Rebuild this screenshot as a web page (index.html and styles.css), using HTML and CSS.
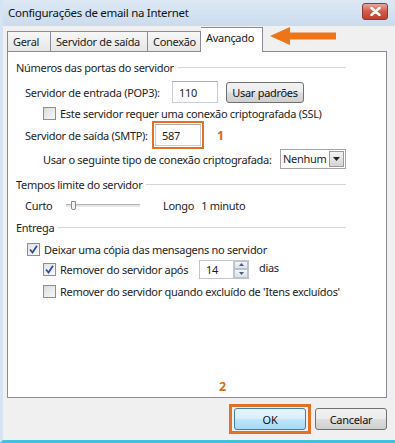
FILE: index.html
```html
<!DOCTYPE html>
<html lang="pt">
<head>
    <meta charset="UTF-8">
    <title>Configurações de email na Internet</title>
    <link rel="stylesheet" href="styles.css">
</head>
<body>
    <div class="window">
        <div class="titlebar">
            <span class="title">Configurações de email na Internet</span>
            <span class="close-btn">
                <svg width="11" height="9" viewBox="0 0 11 9"><path d="M1.5 1 L9.5 8 M9.5 1 L1.5 8" stroke="#fff" stroke-width="2.4" stroke-linecap="round"/></svg>
            </span>
        </div>
        <div class="client">
            <div class="tabs">
                <div class="tab">Geral</div>
                <div class="tab">Servidor de saída</div>
                <div class="tab">Conexão</div>
                <div class="tab active">Avançado</div>
            </div>
            <svg class="arrow" width="66" height="18" viewBox="0 0 66 18">
                <path d="M0 9 L20 0 L20 5.5 L66 5.5 L66 12.5 L20 12.5 L20 18 Z" fill="#ee7418"/>
            </svg>
            <div class="panel">
                <div class="group-head">Números das portas do servidor</div>
                <div class="row row-pop">
                    <span class="label lbl-pop">Servidor de entrada (POP3):</span>
                    <span class="textbox tb-pop">110</span>
                    <span class="button btn-defaults">Usar padrões</span>
                </div>
                <div class="row row-ssl indent2">
                    <span class="checkbox"></span>
                    <span>Este servidor requer uma conexão criptografada (SSL)</span>
                </div>
                <div class="row row-smtp">
                    <span class="label lbl-smtp">Servidor de saída (SMTP):</span>
                    <span class="highlight">
                        <span class="textbox tb-smtp">587</span>
                    </span>
                    <span class="mark mark-1">1</span>
                </div>
                <div class="row row-enc indent2">
                    <span class="label lbl-enc">Usar o seguinte tipo de conexão criptografada:</span>
                    <span class="combo">
                        <span class="combo-text">Nenhum</span>
                        <span class="combo-btn">
                            <svg width="7" height="4" viewBox="0 0 7 4"><path d="M0 0 H7 L3.5 4 Z" fill="#222"/></svg>
                        </span>
                    </span>
                </div>
                <div class="group-head head-timeout">Tempos limite do servidor</div>
                <div class="row row-slider">
                    <span class="lbl-short">Curto</span>
                    <span class="slider">
                        <span class="slider-thumb"></span>
                    </span>
                    <span class="lbl-long">Longo</span>
                    <span>1 minuto</span>
                </div>
                <div class="group-head head-delivery">Entrega</div>
                <div class="row row-keep indent1">
                    <span class="checkbox checked">
                        <svg width="9" height="9" viewBox="0 0 9 9"><path d="M1 4.5 L3.5 7.5 L8 0.8" fill="none" stroke="#2b4fa8" stroke-width="1.8"/></svg>
                    </span>
                    <span>Deixar uma cópia das mensagens no servidor</span>
                </div>
                <div class="row row-remove indent2">
                    <span class="checkbox checked">
                        <svg width="9" height="9" viewBox="0 0 9 9"><path d="M1 4.5 L3.5 7.5 L8 0.8" fill="none" stroke="#2b4fa8" stroke-width="1.8"/></svg>
                    </span>
                    <span class="lbl-remove">Remover do servidor após</span>
                    <span class="spin">
                        <span class="spin-text">14</span>
                        <span class="spin-btns">
                            <span class="spin-btn"><svg width="5" height="3" viewBox="0 0 5 3"><path d="M0 3 H5 L2.5 0 Z" fill="#4a5a7a"/></svg></span>
                            <span class="spin-btn"><svg width="5" height="3" viewBox="0 0 5 3"><path d="M0 0 H5 L2.5 3 Z" fill="#4a5a7a"/></svg></span>
                        </span>
                    </span>
                    <span class="lbl-days">dias</span>
                </div>
                <div class="row row-deleted indent2">
                    <span class="checkbox"></span>
                    <span>Remover do servidor quando excluído de 'Itens excluídos'</span>
                </div>
            </div>
            <div class="footer">
                <span class="mark mark-2">2</span>
                <span class="highlight hl-ok">
                    <span class="button btn-ok">OK</span>
                </span>
                <span class="button btn-cancel">Cancelar</span>
            </div>
        </div>
    </div>
</body>
</html>
```

FILE: styles.css
```css
* {
    box-sizing: border-box;
    margin: 0;
    padding: 0;
}
body {
    width: 395px;
    height: 443px;
    overflow: hidden;
    font-family: "Noto Sans", "Open Sans", sans-serif;
    font-size: 11px;
    letter-spacing: -0.3px;
    color: #1e1e1e;
    background: #f0f0f0;
    white-space: nowrap;
}
.window {
    height: 443px;
    border-left: 3px solid #d5e3f2;
    border-bottom: 3px solid #3fc2df;
    background: #f0f0f0;
    position: relative;
}
.titlebar {
    height: 26px;
    display: flex;
    align-items: center;
    justify-content: space-between;
    padding: 0 7px 0 5px;
    background: linear-gradient(#dde8f4, #cbdcee);
}
.title {
    font-size: 11.5px;
    color: #111;
    margin-top: -2px;
}
.close-btn {
    width: 26px;
    height: 17px;
    margin-top: -4px;
    border: 1px solid #8b3a33;
    border-radius: 3px;
    background: linear-gradient(#e8a89e, #cf5b4b 50%, #c0402f);
    display: flex;
    align-items: center;
    justify-content: center;
}
.client {
    padding: 0 8px 0 4px;
}
.tabs {
    display: flex;
    align-items: flex-end;
    height: 25px;
}
.tab {
    height: 20px;
    padding: 0 5px;
    line-height: 20px;
    border: 1px solid #898c95;
    border-bottom: none;
    border-right: none;
    background: linear-gradient(#f7f7f7, #e6e6e6);
    color: #222;
    flex: none;
}
.tab:nth-child(3) {
    border-right: 1px solid #898c95;
}
.tab:first-child {
    width: 43px;
}
.tab:nth-child(2) {
    width: 97px;
}
.tab:nth-child(3) {
    width: 54px;
}
.tab.active {
    height: 25px;
    width: 62px;
    line-height: 20px;
    padding: 0 5px;
    margin-bottom: -1px;
    background: #fff;
    border-left: none;
    border-right: 1px solid #898c95;
    border-top: 1px solid #898c95;
    position: relative;
    z-index: 1;
}
.arrow {
    position: absolute;
    left: 267px;
    top: 27px;
}
.panel {
    height: 347px;
    background: #fff;
    border: 1px solid #898c95;
    padding: 5px 0 0 8px;
}
.group-head {
    width: 330px;
    height: 20px;
    display: flex;
    align-items: center;
    gap: 4px;
}
.group-head::after {
    content: "";
    flex: 1;
    border-top: 1px solid #d5d5d5;
}
.head-timeout {
    margin-top: 5px;
}
.head-delivery {
    margin-top: 2px;
}
.row {
    display: flex;
    align-items: center;
    padding-left: 9px;
}
.row > span {
    flex: none;
}
.indent1 {
    padding-left: 11px;
}
.indent2 {
    padding-left: 27px;
}
.row-pop {
    height: 22px;
    margin-top: 4px;
}
.row-ssl {
    height: 18px;
    margin-top: 1px;
}
.row-smtp {
    height: 22px;
    margin-top: 2px;
}
.row-enc {
    height: 20px;
    margin-top: 3px;
}
.row-slider {
    height: 20px;
    margin-top: 1px;
}
.row-keep {
    height: 18px;
    margin-top: 3px;
}
.row-remove {
    height: 20px;
    margin-top: 1px;
}
.row-deleted {
    height: 18px;
    margin-top: 3px;
}
.lbl-pop {
    width: 147px;
}
.lbl-smtp {
    width: 127px;
}
.lbl-enc {
    width: 237px;
}
.textbox {
    display: flex;
    align-items: center;
    height: 22px;
    padding-left: 6px;
    border: 1px solid #c9ced6;
    border-top-color: #abadb3;
    background: #fff;
}
.tb-pop {
    width: 46px;
}
.tb-smtp {
    width: 46px;
}
.highlight {
    display: inline-flex;
    padding: 1px;
    border: 2px solid #e27128;
}
.mark {
    color: #e0691a;
    font-weight: bold;
    font-size: 12.5px;
    letter-spacing: 0;
}
.mark-1 {
    margin-left: 13px;
}
.button {
    display: inline-flex;
    align-items: center;
    justify-content: center;
    height: 21px;
    border: 1px solid #707070;
    border-radius: 3px;
    background: linear-gradient(#f2f2f2 0%, #ebebeb 48%, #dddddd 52%, #cfcfcf 100%);
    color: #111;
}
.btn-defaults {
    width: 78px;
    margin-left: 8px;
}
.checkbox {
    width: 13px;
    height: 13px;
    margin-right: 4px;
    border: 1px solid #8e8f8f;
    background: linear-gradient(135deg, #dcdcdc, #f8f8f8);
    display: inline-flex;
    align-items: center;
    justify-content: center;
}
.checkbox.checked {
    background: linear-gradient(135deg, #e4e4e4, #fafafa);
}
.combo {
    display: flex;
    height: 20px;
    width: 66px;
    border: 1px solid #a4a4a4;
    background: #fff;
}
.combo-text {
    flex: 1;
    padding-left: 2px;
    line-height: 17px;
}
.combo-btn {
    width: 15px;
    margin: 1px;
    border: 1px solid #9a9a9a;
    background: linear-gradient(#f2f2f2, #d4d4d4);
    display: flex;
    align-items: center;
    justify-content: center;
}
.lbl-short {
    width: 41px;
}
.slider {
    width: 74px;
    height: 3px;
    border-top: 1px solid #b4b4b4;
    border-bottom: 1px solid #e8e8e8;
    background: #e6e6e6;
    display: flex;
    align-items: center;
}
.slider-thumb {
    width: 5px;
    height: 9px;
    margin-left: 5px;
    border: 1px solid #8a8a8a;
    border-radius: 0 0 2px 2px;
    background: #f4f4f4;
}
.lbl-long {
    margin-left: 23px;
    margin-right: 7px;
}
.lbl-remove {
    width: 139px;
}
.spin {
    display: flex;
    width: 50px;
    height: 19px;
    border: 1px solid #c2c6cc;
    background: #fff;
}
.spin-text {
    flex: 1;
    padding-left: 6px;
    line-height: 17px;
}
.spin-btns {
    width: 15px;
    display: flex;
    flex-direction: column;
    border-left: 1px solid #c2c6cc;
}
.spin-btn {
    flex: 1;
    display: flex;
    align-items: center;
    justify-content: center;
    background: linear-gradient(#f4f6f9, #dde3ea);
    border: 1px solid #b9c2cf;
}
.lbl-days {
    margin-left: 10px;
    margin-top: -3px;
}
.footer {
    height: 42px;
    display: flex;
    justify-content: flex-end;
    align-items: center;
    gap: 4px;
    position: relative;
}
.mark-2 {
    position: absolute;
    left: 212px;
    top: -20px;
}
.hl-ok {
    padding: 1px 2px;
    border-width: 3px;
}
.btn-ok {
    width: 72px;
    height: 22px;
    border-color: #3c7fb1;
    background: linear-gradient(#e8f5fc 0%, #d9eefa 48%, #bee6fd 52%, #a7d9f5 100%);
}
.btn-cancel {
    width: 72px;
    height: 22px;
}
```
